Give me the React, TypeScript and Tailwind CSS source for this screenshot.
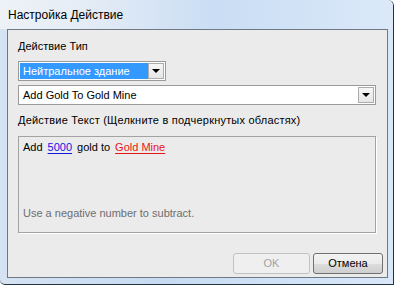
import React from 'react';

const font = { fontFamily: '"Liberation Sans", Arial, sans-serif' };

const Arrow: React.FC = () => (
  <div className="w-[16px] h-full border border-[#acacac] bg-[linear-gradient(180deg,#f6f6f6_0%,#e6e6e6_100%)] flex items-center justify-center">
    <div className="w-0 h-0 border-l-[4px] border-r-[4px] border-t-[4px] border-l-transparent border-r-transparent border-t-black" />
  </div>
);

const Combo: React.FC<{ value: string; selected?: boolean; className?: string }> = ({ value, selected, className }) => (
  <div className={`h-[20px] border border-[#9a9a9a] bg-white p-px flex ${className ?? ''}`}>
    <div
      className={`flex-1 flex items-center pl-[3px] text-[11px] ${
        selected ? 'bg-[#3399ff] text-white' : 'text-black'
      }`}
    >
      {value}
    </div>
    <Arrow />
  </div>
);

export default function App() {
  return (
    <div
      className="w-[394px] h-[285px] flex flex-col overflow-hidden rounded-tr-[6px] rounded-bl-[5px] border-r border-b border-[#26323f] bg-[linear-gradient(90deg,#d5e3f2_0%,#c6dbf2_40%,#d9e8f9_100%)]"
      style={font}
    >
      {/* Title bar */}
      <div className="h-[29px] pl-[8px] flex items-center text-[12px] text-black bg-[linear-gradient(90deg,#eef2f7_0%,#e2ebf5_25%,#c9ddf4_55%,#dbe9f9_100%)]">
        Настройка Действие
      </div>

      {/* Client area */}
      <div className="ml-[7px] w-[381px] h-[249px] border border-[#6f7986] bg-[#ebebeb] flex flex-col">
        <div className="pl-[10px] pr-[11px] pt-[10px] flex flex-col">
          <div className="h-[13px] leading-[13px] text-[11px] text-black">Действие Тип</div>
          <Combo value="Нейтральное здание" selected className="mt-[8px] w-[148px]" />
          <Combo value="Add Gold To Gold Mine" className="mt-[4px] w-full" />
          <div className="mt-[9px] h-[13px] leading-[13px] text-[11px] text-black tracking-[0.2px]">
            Действие Текст (Щелкните в подчеркнутых областях)
          </div>

          {/* Rich text box */}
          <div className="mt-[9px] h-[97px] border border-[#a3a3a3] shadow-[1px_1px_0_#ffffff] flex flex-col pl-[4px] pt-[4px] pb-[12px] text-[11px]">
            <div className="flex gap-[5px] leading-[13px]">
              <span className="text-black">Add</span>
              <span className="text-[#1414e6] underline underline-offset-2">5000</span>
              <span className="text-black">gold to</span>
              <span className="text-[#e81515] underline underline-offset-2">Gold Mine</span>
            </div>
            <div className="mt-auto leading-[13px] text-[#6e6e6e]">Use a negative number to subtract.</div>
          </div>
        </div>

        {/* Buttons */}
        <div className="mt-[20px] pr-[4px] flex justify-end gap-[3px]">
          <button className="w-[77px] h-[21px] rounded-[3px] border border-[#c2c2c2] bg-[#efefef] text-[11px] text-[#a3a3a3]">
            OK
          </button>
          <button className="w-[70px] h-[21px] rounded-[3px] border border-[#707070] bg-[linear-gradient(180deg,#f3f3f3_0%,#ebebeb_50%,#dddddd_51%,#cfcfcf_100%)] text-[11px] text-black">
            Отмена
          </button>
        </div>
      </div>
    </div>
  );
}
